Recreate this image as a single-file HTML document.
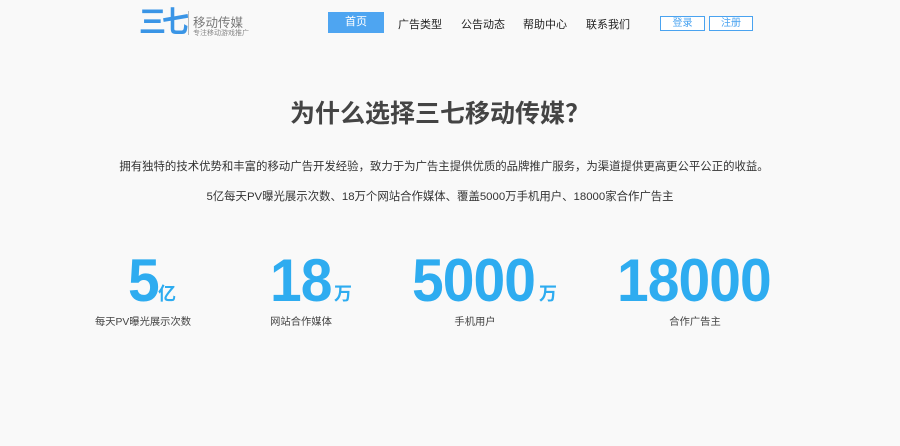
<!DOCTYPE html>
<html><head><meta charset="utf-8"><style>
body{margin:0;width:900px;height:446px;background:#f9f9f9;font-family:"Liberation Sans","Noto Sans CJK SC",sans-serif;position:relative;overflow:hidden}
.a{position:absolute;white-space:nowrap}
.nav{font-size:11px;color:#222;top:16px}
.btn{border:1px solid #4aa3f0;color:#4aa3f0;font-size:10px;text-align:center;line-height:13px;height:13px;top:16px;background:#fff}
.num{color:#2eacf0;font-weight:bold;font-size:60px;top:246px;font-family:"Liberation Sans",sans-serif;letter-spacing:-1px;transform:scaleX(0.95);transform-origin:left}
.u{color:#2eacf0;font-weight:bold;font-size:18px;top:280px}
.lab{font-size:10.3px;color:#444;top:313px;text-align:center;transform:translateX(-50%)}
</style></head><body>
<div class="a" style="left:139px;top:6px;font-size:27px;font-weight:bold;color:#3a95e6;letter-spacing:-4px;line-height:32px;transform:scaleY(1.1)">三七</div>
<div class="a" style="left:188px;top:11px;width:1px;height:24px;background:#bbb"></div>
<div class="a" style="left:193px;top:12px;font-size:12.5px;color:#777">移动传媒</div>
<div class="a" style="left:193px;top:28px;font-size:7px;color:#888">专注移动游戏推广</div>
<div class="a" style="left:328px;top:12px;width:56px;height:21px;background:#4ea5f1;color:#fff;font-size:11px;text-align:center;line-height:21px">首页</div>
<div class="a nav" style="left:398px">广告类型</div>
<div class="a nav" style="left:461px">公告动态</div>
<div class="a nav" style="left:523px">帮助中心</div>
<div class="a nav" style="left:586px">联系我们</div>
<div class="a btn" style="left:660px;width:43px">登录</div>
<div class="a btn" style="left:709px;width:42px">注册</div>
<div class="a" style="left:290px;top:94px;font-size:25px;font-weight:bold;color:#444">为什么选择三七移动传媒？</div>
<div class="a" style="left:0;width:888px;text-align:center;top:158px;font-size:11.4px;color:#333">拥有独特的技术优势和丰富的移动广告开发经验，致力于为广告主提供优质的品牌推广服务，为渠道提供更高更公平公正的收益。</div>
<div class="a" style="left:0;width:880px;text-align:center;top:188px;font-size:11.4px;color:#333">5亿每天PV曝光展示次数、18万个网站合作媒体、覆盖5000万手机用户、18000家合作广告主</div>
<div class="a num" style="left:128px">5</div><div class="a u" style="left:158px">亿</div>
<div class="a num" style="left:270px">18</div><div class="a u" style="left:334px">万</div>
<div class="a num" style="left:412px">5000</div><div class="a u" style="left:539px">万</div>
<div class="a num" style="left:617px">18000</div>
<div class="a lab" style="left:143px">每天PV曝光展示次数</div>
<div class="a lab" style="left:301px">网站合作媒体</div>
<div class="a lab" style="left:475px">手机用户</div>
<div class="a lab" style="left:695px">合作广告主</div>
</body></html>
